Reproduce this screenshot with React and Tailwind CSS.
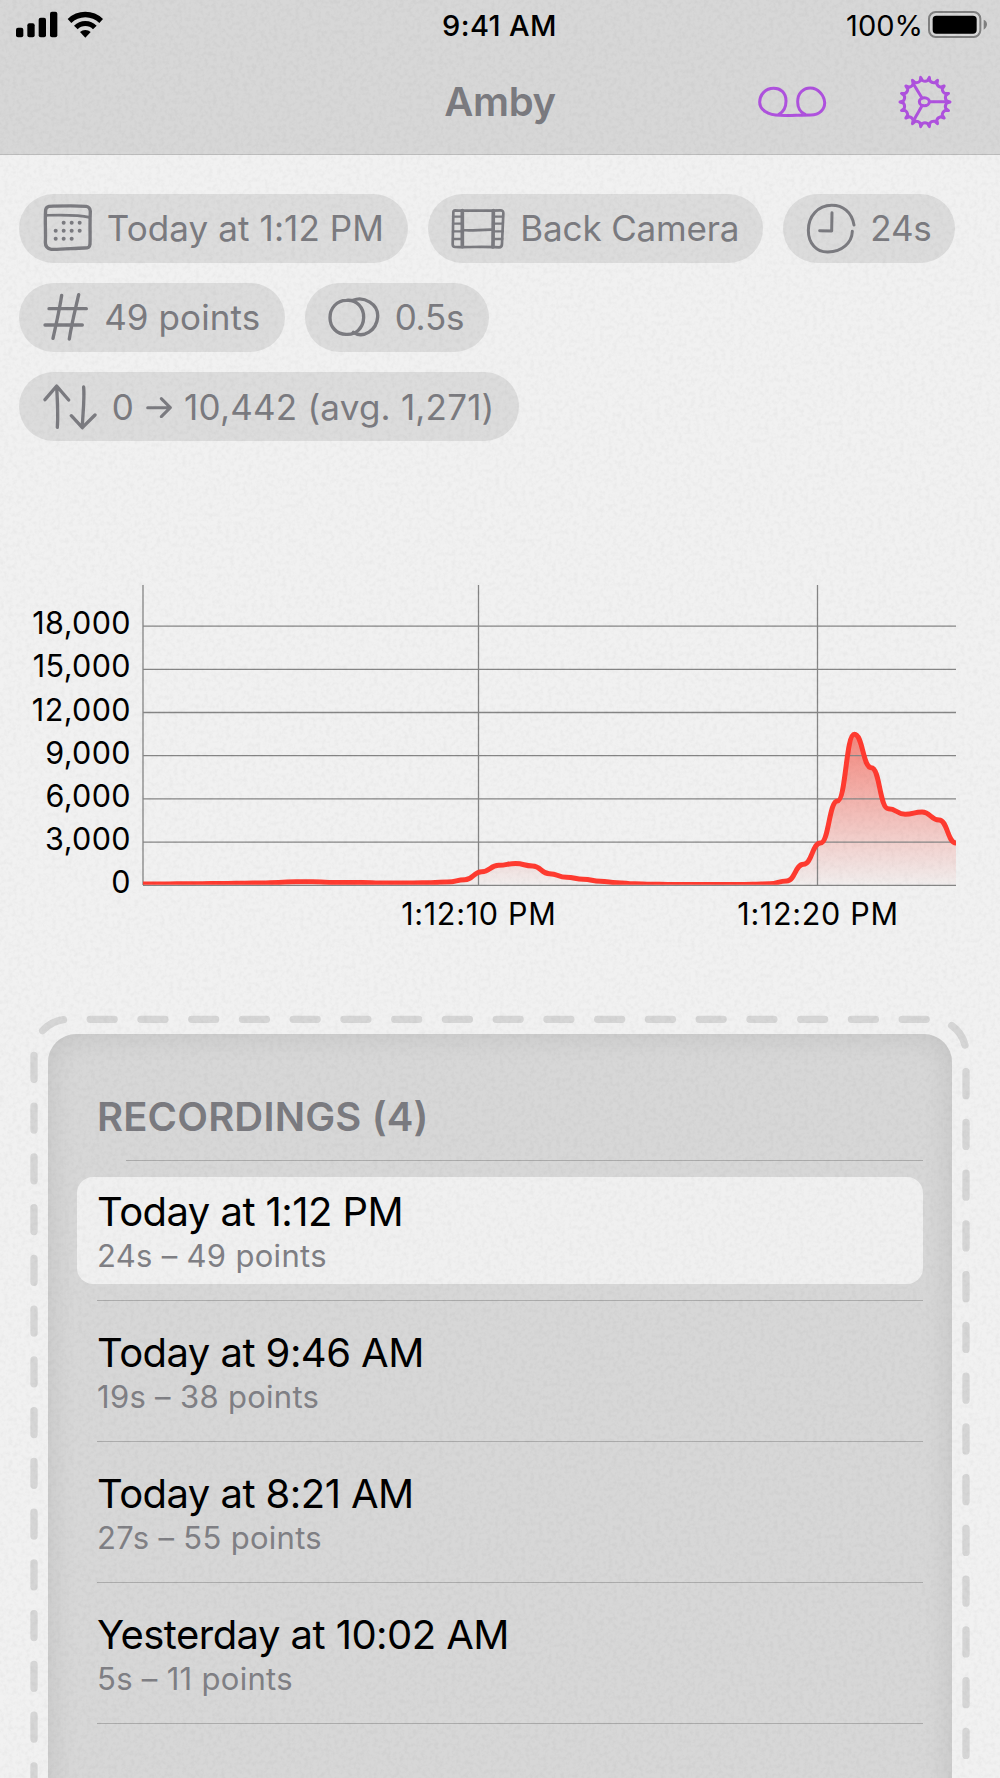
const RECORDINGS = [
  { title: "Today at 1:12 PM", detail: "24s – 49 points", selected: true },
  { title: "Today at 9:46 AM", detail: "19s – 38 points" },
  { title: "Today at 8:21 AM", detail: "27s – 55 points" },
  { title: "Yesterday at 10:02 AM", detail: "5s – 11 points" },
]

// one sample every half second, as heights above the baseline
const SAMPLES = [
  1, 1, 1.2, 1.2, 1.4, 1.6, 1.8, 2, 2.6, 3.2, 3.2, 2.6, 2.4, 2.4, 2, 2, 2, 2.3, 3, 5.3, 13.3, 19.7, 21.5, 19, 11.3,
  7.7, 5.7, 3.7, 2.3, 1.2, 0.8, 0.6, 0.5, 0.5, 0.5, 0.5, 0.7, 1.2, 4, 20.7, 42, 84, 150.7, 117.3, 76.3, 70.7, 73, 65, 42,
]

const LEFT = 143
const RIGHT = 956
const BASE = 315
const STEP = (RIGHT - LEFT) / (SAMPLES.length - 1)

function linePath() {
  const pts = SAMPLES.map((v, i) => [LEFT + i * STEP, BASE - v])
  return pts.reduce((d, [x, y], i) => {
    if (i === 0) return `M${x} ${y}`
    const [px, py] = pts[i - 1]
    const mid = (px + x) / 2
    return `${d}C${mid} ${py} ${mid} ${y} ${x} ${y}`
  }, "")
}

function Paper() {
  return (
    <svg className="absolute inset-0 w-full h-full pointer-events-none opacity-[0.025]">
      <filter id="grain">
        <feTurbulence type="fractalNoise" baseFrequency="0.23" numOctaves="3" seed="4" />
        <feColorMatrix values="0 0 0 0 0  0 0 0 0 0  0 0 0 0 0  2.4 0 0 0 -0.9" />
      </filter>
      <rect width="100%" height="100%" filter="url(#grain)" />
    </svg>
  )
}

function StatusBar() {
  return (
    <div className="grid grid-cols-3 items-center h-[50px] pl-4 pr-[13px] text-black text-[29px]">
      <svg width="88" height="28" viewBox="0 0 264 84">
        <rect x="0" y="50" width="22" height="29" rx="6" />
        <rect x="34" y="37" width="22" height="42" rx="6" />
        <rect x="68" y="20" width="22" height="59" rx="6" />
        <rect x="102" y="2" width="22" height="77" rx="6" />
        <path d="M155 24A75 75 0 0 1 261 24L250 36A59 59 0 0 0 166 36Z" />
        <path d="M174 44A48 48 0 0 1 242 44L231 55A32 32 0 0 0 185 55Z" />
        <path d="M192 63A24 24 0 0 1 224 63L208 80Z" />
      </svg>
      <div className="pt-0.5 -ml-1 text-center font-medium tracking-[0.4px]">9:41 AM</div>
      <div className="flex items-center justify-end gap-[5px]">
        <span className="pt-0.5">100%</span>
        <svg width="59" height="28" viewBox="0 0 177 84">
          <rect x="3" y="3" width="154" height="75" rx="20" fill="none" stroke="#808080" strokeWidth="6" />
          <rect x="14" y="14" width="132" height="54" rx="11" />
          <path d="M167 26Q177 30 177 40T167 56Z" fill="#808080" />
        </svg>
      </div>
    </div>
  )
}

function VoicemailIcon() {
  return (
    <svg width="70" height="34" viewBox="0 0 210 102" fill="none" stroke="#af52de" strokeWidth="9" strokeLinecap="round" strokeLinejoin="round">
      <path d="M66 88C80 80 87 66 87 48C87 22 70 10 50 10C26 10 8 28 8 52C8 74 32 91 69 91C94 92 129 90 162 90C186 90 204 74 203 52C201 30 183 9 160 9C138 9 122 26 122 50C122 68 131 82 144 88" />
    </svg>
  )
}

function GearIcon() {
  const at = (deg, r) => {
    const a = (deg * Math.PI) / 180
    return `${(81 + r * Math.cos(a)).toFixed(1)} ${(81 + r * Math.sin(a)).toFixed(1)}`
  }
  const teeth = Array.from({ length: 18 }, (_, i) => i * 20)
  const rim = teeth.map((t) => `L${at(t, 75)}L${at(t + 3, 65)}Q${at(t + 11, 60)} ${at(t + 17, 65)}`).join("")
  return (
    <svg width="54" height="54" viewBox="0 0 162 162" fill="none" stroke="#af52de" strokeWidth="9" strokeLinecap="round" strokeLinejoin="round">
      <path d={`M${at(0, 75)}${rim}Z`} />
      <ellipse cx="79" cy="80" rx="15" ry="12" />
      <path d="M95 80H146M72 69L46 26M72 92L46 138" />
    </svg>
  )
}

function NavBar() {
  return (
    <div className="grid grid-cols-3 items-center h-[102px] px-12 pt-px">
      <div />
      <h1 className="pt-px text-center text-[40px] font-semibold tracking-[-0.3px] text-[#7b7b80]">Amby</h1>
      <div className="flex items-center justify-end gap-[71px]">
        <VoicemailIcon />
        <GearIcon />
      </div>
    </div>
  )
}

function Glyph({ w, h, sw = 8, children }) {
  return (
    <svg
      className="shrink-0"
      width={w / 3}
      height={h / 3}
      viewBox={`0 0 ${w} ${h}`}
      fill="none"
      stroke="currentColor"
      strokeWidth={sw}
      strokeLinecap="round"
      strokeLinejoin="round"
    >
      {children}
    </svg>
  )
}

function CalendarIcon() {
  const dots = [[62, 56], [86, 56], [110, 56], [38, 80], [62, 80], [86, 80], [110, 80], [38, 104], [62, 104], [86, 104]]
  return (
    <Glyph w={150} h={144} sw={10}>
      <path d="M18 7C50 6 90 4 130 7C138 8 141 13 142 22C140 60 142 90 141 120C140 131 136 132 124 132C90 133 50 137 25 136C12 134 7 128 7 115C9 80 5 50 8 18Q9 9 18 7Z" />
      <path d="M10 34C50 33 100 31 140 40" strokeWidth="8" />
      {dots.map(([x, y]) => (
        <circle key={`${x}-${y}`} cx={x} cy={y} r="6" fill="currentColor" stroke="none" />
      ))}
    </Glyph>
  )
}

function FilmIcon() {
  return (
    <Glyph w={162} h={124} sw={8}>
      <path d="M12 7C50 9 100 8 148 7Q158 7 157 16L153 108Q153 118 144 118C100 115 50 118 12 117Q5 117 5 109L7 14Q7 7 12 7Z" />
      <path d="M34 8V116M127 8L126 117" strokeWidth="11" />
      <path d="M33 66C60 70 90 64 127 65" />
      <path d="M6 26H31M6 47H31M6 70H31M6 93H31M128 26H156M128 47H155M128 70H155M128 93H154" strokeWidth="7" />
    </Glyph>
  )
}

function ClockIcon() {
  return (
    <Glyph w={150} h={154} sw={9}>
      <path d="M144 66C137 26 110 7 77 7C36 7 7 40 7 82C7 122 32 148 66 147C108 146 138 120 139 85" />
      <path d="M78 29L77 84L41 83" />
    </Glyph>
  )
}

function HashIcon() {
  return (
    <Glyph w={136} h={144} sw={10}>
      <path d="M56 7C50 50 40 90 30 136M107 5C97 50 86 90 79 138M18 47H130M6 96H118" />
    </Glyph>
  )
}

function CirclesIcon() {
  return (
    <Glyph w={154} h={120} sw={10}>
      <path d="M55 10C86 7 108 32 107 62C106 92 84 115 54 112C26 112 6 90 6 62C6 34 26 10 55 10Z" />
      <path d="M75 10C108 -4 152 22 149 60C146 100 106 126 76 106" />
    </Glyph>
  )
}

function UpDownIcon() {
  return (
    <Glyph w={162} h={136} sw={10}>
      <path d="M43 130C46 90 43 50 41 7M6 47L41 6L77 48M122 9C125 50 119 90 118 129M85 95L118 131L156 93" />
    </Glyph>
  )
}

function ArrowRight() {
  return (
    <Glyph w={78} h={66} sw={9}>
      <path d="M5 35H72M46 8L73 35L46 62" />
    </Glyph>
  )
}

function Chip({ className, children }) {
  return (
    <div className={`flex items-center h-[69.5px] pl-[23.5px] rounded-full bg-[#dcdcdc] text-[#7b7b80] text-[35px] whitespace-nowrap ${className}`}>
      {children}
    </div>
  )
}

function Chips() {
  return (
    <div className="flex flex-col shrink-0 gap-[19.7px] pl-[19.3px] pt-[38.5px]">
      <div className="flex gap-5">
        <Chip className="w-[388.5px] gap-[14px]">
          <CalendarIcon />
          <span className="tracking-[0.1px]">Today at 1:12 PM</span>
        </Chip>
        <Chip className="w-[335px] gap-[15px]">
          <FilmIcon />
          <span className="tracking-[-0.15px]">Back Camera</span>
        </Chip>
        <Chip className="w-[172.5px] gap-[14px]">
          <ClockIcon />
          <span className="tracking-[-0.2px]">24s</span>
        </Chip>
      </div>
      <div className="flex gap-5">
        <Chip className="w-[265.5px] gap-[16px]">
          <HashIcon />
          <span className="tracking-[0.1px]">49 points</span>
        </Chip>
        <Chip className="w-[184px] gap-[15px]">
          <CirclesIcon />
          <span className="tracking-[-0.2px]">0.5s</span>
        </Chip>
      </div>
      <Chip className="w-[499.5px] gap-[15px] pt-px">
        <UpDownIcon />
        <span className="flex items-center gap-3 tracking-[0.2px]">
          0 <ArrowRight /> 10,442 (avg. 1,271)
        </span>
      </Chip>
    </div>
  )
}

function Chart() {
  const line = linePath()
  const rows = [0, 3000, 6000, 9000, 12000, 15000, 18000]
  return (
    <svg className="block shrink-0 mt-[128.6px]" width="1000" height="380" viewBox="0 0 1000 380">
      <defs>
        <linearGradient id="fade" gradientUnits="userSpaceOnUse" x1="0" y1="164" x2="0" y2={BASE}>
          <stop offset="0" stopColor="#f5402f" stopOpacity="0.6" />
          <stop offset="1" stopColor="#f5402f" stopOpacity="0.02" />
        </linearGradient>
        <clipPath id="plot">
          <rect x={LEFT} y="0" width={RIGHT - LEFT} height={BASE - 0.2} />
        </clipPath>
      </defs>
      <path d={`${line}L${RIGHT} ${BASE}L${LEFT} ${BASE}Z`} fill="url(#fade)" />
      <g stroke="#868686" strokeWidth="1.3">
        {rows.map((v) => (
          <line key={v} x1={LEFT} x2={RIGHT} y1={BASE + 0.3 - (v / 3000) * 43.2} y2={BASE + 0.3 - (v / 3000) * 43.2} />
        ))}
        <path d={`M${LEFT} 15V${BASE}M478.5 15V${BASE}M817.5 15V${BASE}`} />
      </g>
      <path d={line} fill="none" stroke="#ff3b30" strokeWidth="5" clipPath="url(#plot)" />
      <g fontSize="30.5" fill="#000">
        {rows.map((v) => (
          <text key={v} x="131" y={323.3 - (v / 3000) * 43.2} textAnchor="end" letterSpacing="0.4">{v.toLocaleString("en-US")}</text>
        ))}
        <text x="478.8" y="354.8" textAnchor="middle" letterSpacing="0.7">1:12:10 PM</text>
        <text x="818" y="354.8" textAnchor="middle" letterSpacing="0.7">1:12:20 PM</text>
      </g>
    </svg>
  )
}

function Recording({ title, detail, selected }) {
  return (
    <li className="h-[141px] pt-[16px]">
      <div className={`h-[107px] pl-5 pt-[10px] rounded-2xl ${selected ? "bg-[#f0f0f0]" : ""}`}>
        <div className="text-[40px] leading-[50px] text-black tracking-[-0.55px]">{title}</div>
        <div className="text-[31px] leading-[38px] text-[#808085] tracking-[0.3px]">{detail}</div>
      </div>
      <div className="mt-[16px] ml-5 h-px bg-[#acacac]" />
    </li>
  )
}

function Recordings() {
  return (
    <section className="relative shrink-0 pt-[84px] px-12">
      {/* stitching around the pocket */}
      <svg className="absolute left-0 top-0" width="1000" height="828" viewBox="0 950 1000 828" fill="none">
        <path d="M34 1789.8V1053.3A34 34 0 0 1 68 1019.3H932A34 34 0 0 1 966 1053.3V1790" stroke="#d6d6d6" strokeWidth="7.3" strokeLinecap="round" strokeDasharray="24 26.75" />
      </svg>
      <div className="h-[820px] rounded-[28px] bg-[#d7d7d7] shadow-[inset_0_0_30px_rgba(0,0,0,0.1)] pt-[58px] px-[29px]">
        <h2 className="pl-5 text-[40px] leading-[50px] font-semibold text-[#7b7b80] tracking-[0.15px]">RECORDINGS (4)</h2>
        <div className="mt-[18px] ml-[49px] h-px bg-[#acacac]" />
        <ul>
          {RECORDINGS.map((r) => (
            <Recording key={r.title} {...r} />
          ))}
        </ul>
      </div>
    </section>
  )
}

export default function App() {
  return (
    <div className="relative flex flex-col w-[1000px] h-[1778px] overflow-hidden bg-[#f1f1f1] font-['Inter',sans-serif]">
      <header className="shrink-0 h-[155px] bg-[#d7d7d7] border-b border-[#bdbdbd]">
        <StatusBar />
        <NavBar />
      </header>
      <Chips />
      <Chart />
      <Recordings />
      <Paper />
    </div>
  )
}
